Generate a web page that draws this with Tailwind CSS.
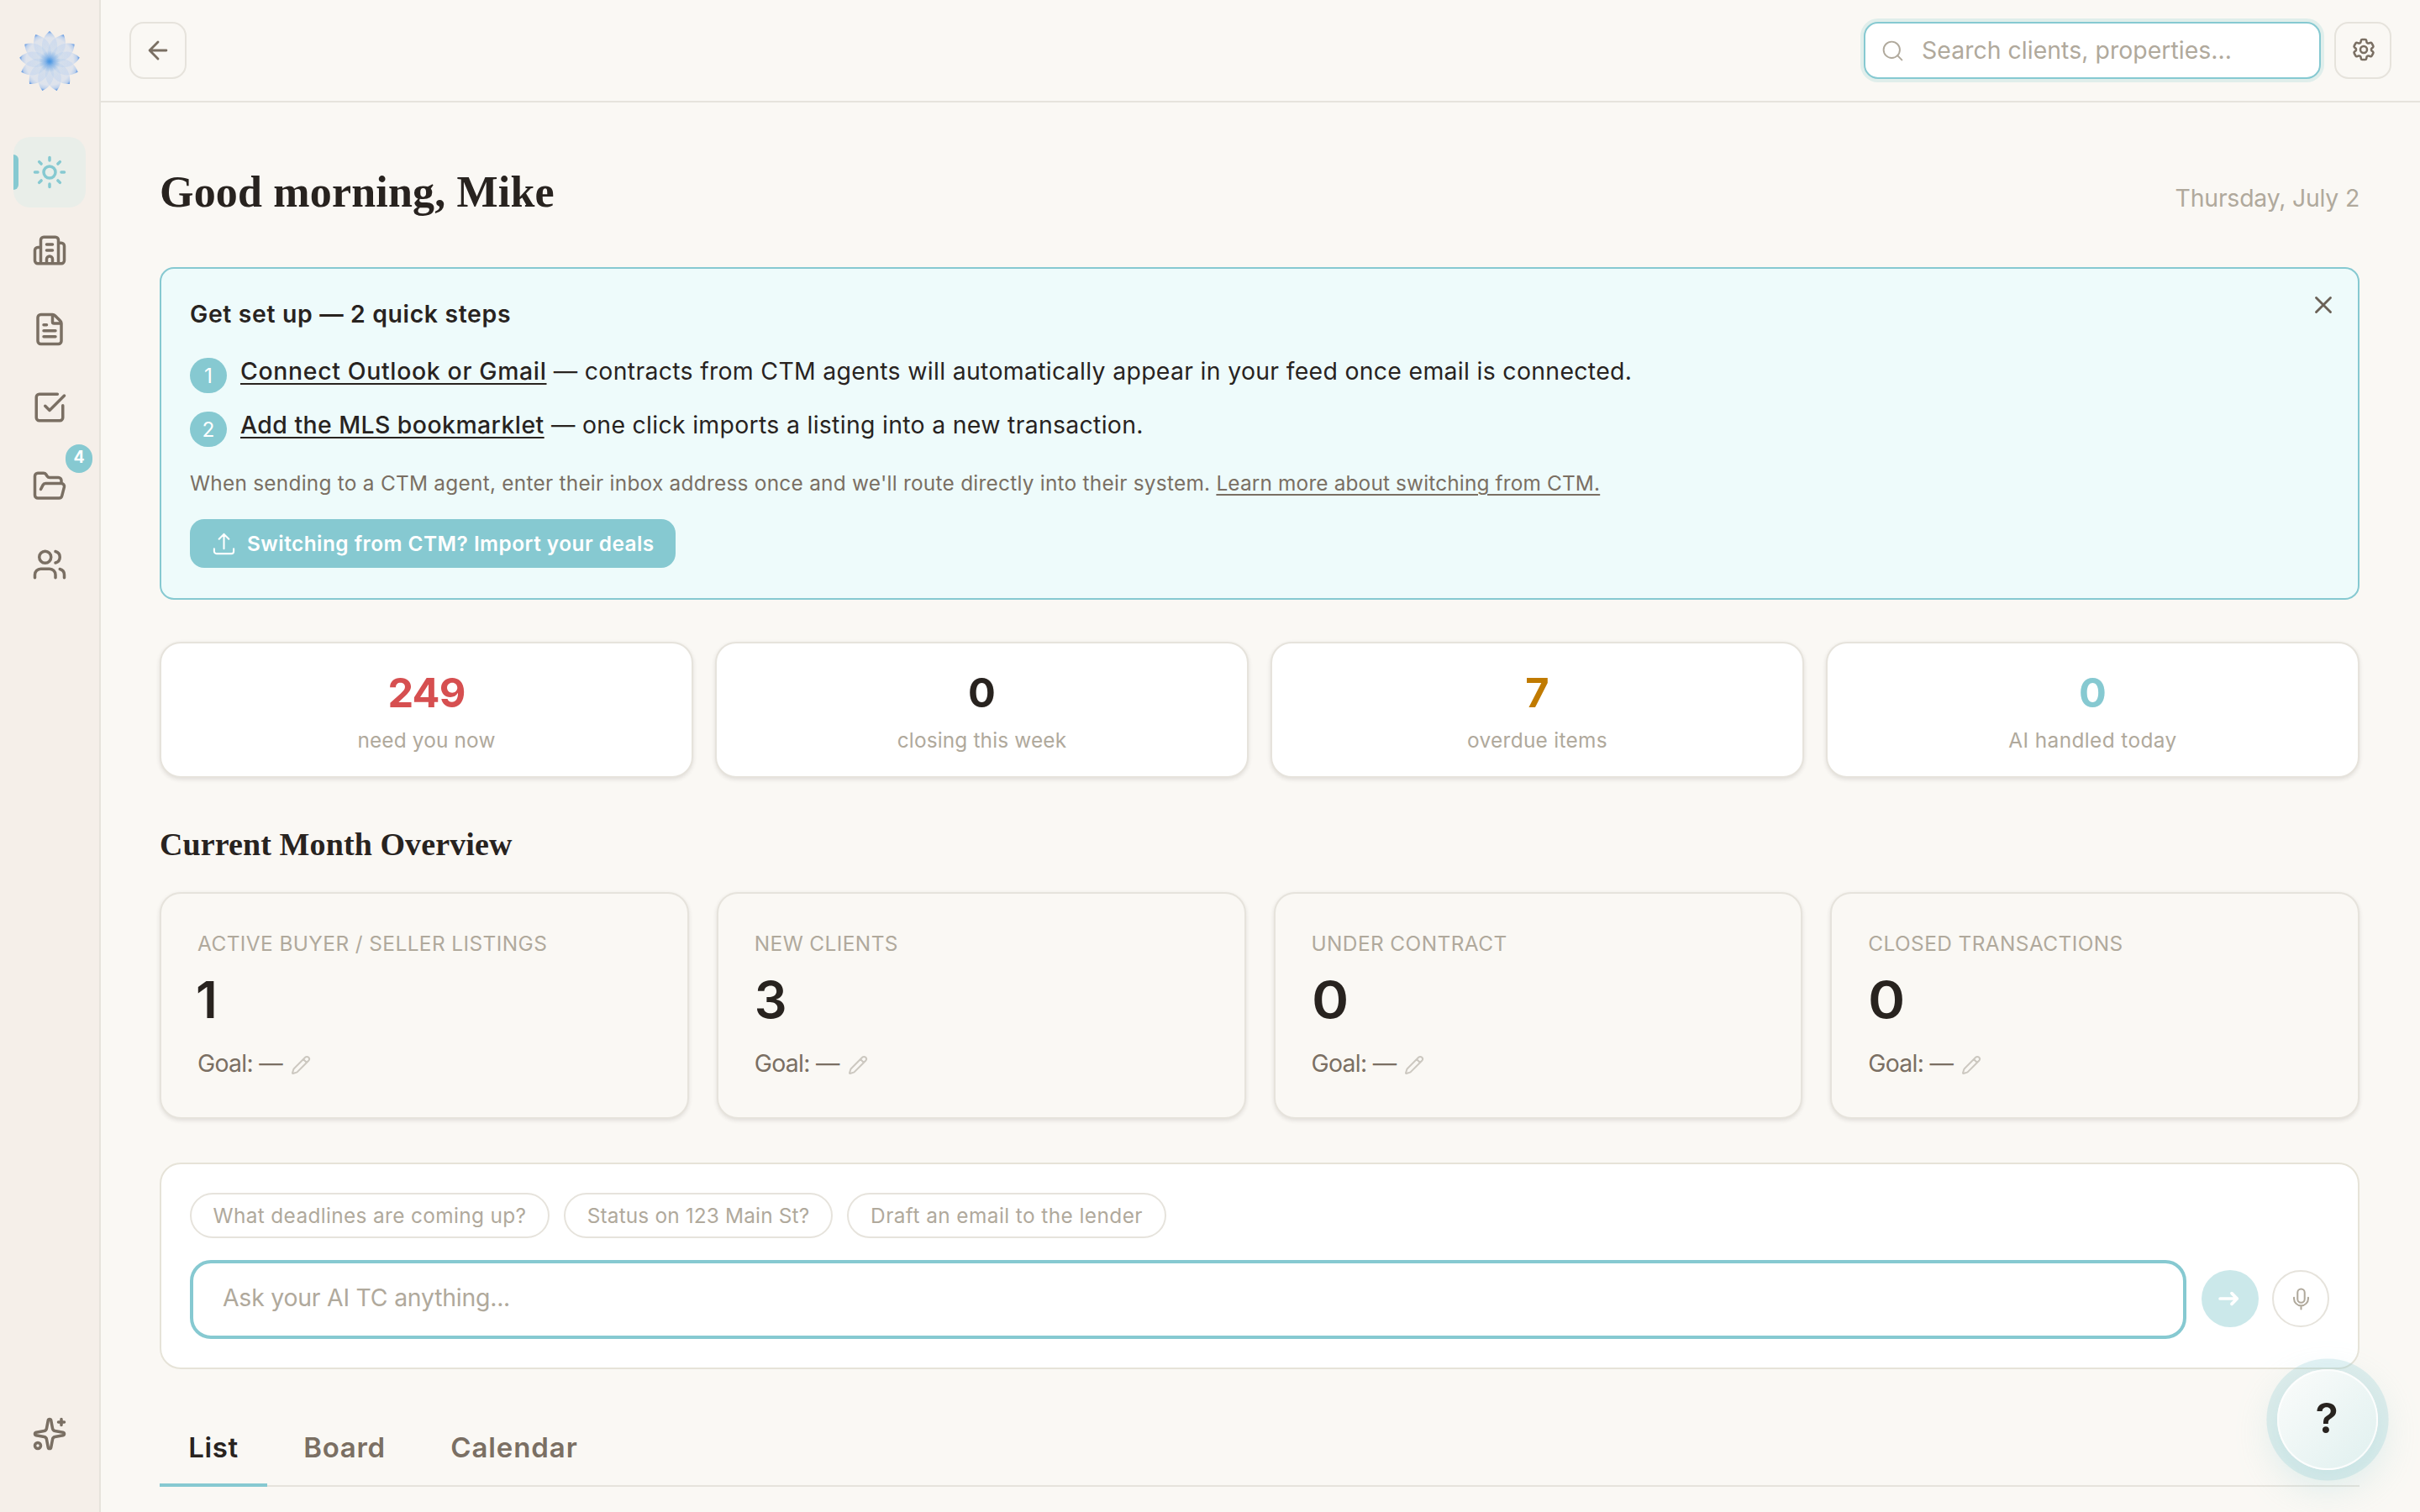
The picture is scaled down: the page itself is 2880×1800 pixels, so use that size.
<!DOCTYPE html>
<html lang="en">
<head>
<meta charset="utf-8">
<title>Dashboard</title>
<script src="https://cdn.jsdelivr.net/npm/@tailwindcss/browser@4"></script>
</head>
<body class="flex w-[2880px] h-[1800px] overflow-hidden relative bg-[#faf8f4] text-[#28231f] font-['Inter',sans-serif] text-[28.4px]">

<!-- Sidebar -->
<aside class="w-[120px] h-full shrink-0 flex flex-col items-center bg-[#f5efe9] border-r-2 border-[#e6e3dc] pt-[35px] pb-[72px]">
  <svg class="size-[74px]" viewBox="-35 -36 70 70">
    <defs>
      <radialGradient id="petal" gradientUnits="userSpaceOnUse" cx="0" cy="0" r="34">
        <stop offset="0" stop-color="#2f8ae2" stop-opacity=".55"/>
        <stop offset=".14" stop-color="#5b9ee6" stop-opacity=".34"/>
        <stop offset=".36" stop-color="#a9c8ee" stop-opacity=".24"/>
        <stop offset=".78" stop-color="#b4cdf2" stop-opacity=".36"/>
        <stop offset=".91" stop-color="#8db6ee" stop-opacity=".55"/>
        <stop offset="1" stop-color="#3f82dc" stop-opacity="1"/>
      </radialGradient>
      <path id="p" d="M0 0C-13 -12 -10 -26 0 -34C10 -26 13 -12 0 0Z" fill="url(#petal)"/>
    </defs>
    <use href="#p"/><use href="#p" transform="rotate(27.69)"/><use href="#p" transform="rotate(55.38)"/><use href="#p" transform="rotate(83.08)"/><use href="#p" transform="rotate(110.77)"/><use href="#p" transform="rotate(138.46)"/><use href="#p" transform="rotate(166.15)"/><use href="#p" transform="rotate(193.85)"/><use href="#p" transform="rotate(221.54)"/><use href="#p" transform="rotate(249.23)"/><use href="#p" transform="rotate(276.92)"/><use href="#p" transform="rotate(304.62)"/><use href="#p" transform="rotate(332.31)"/>
  </svg>
  <nav class="mt-[54px] flex flex-col gap-[9.4px] text-[#7a6f63]">
    <a class="relative flex items-center justify-center w-[86px] h-[84px] rounded-[20px] bg-[#e9eee9] text-[#86c9d1]">
      <span class="absolute left-0 top-[21px] w-[6px] h-[42px] rounded-r-[6px] bg-[#86c9d1]"></span>
      <svg class="size-[42px]" viewBox="0 0 24 24" fill="none" stroke="currentColor" stroke-width="2" stroke-linecap="round" stroke-linejoin="round"><circle cx="12" cy="12" r="4"/><path d="M12 2v2M12 20v2M4.93 4.93l1.41 1.41M17.66 17.66l1.41 1.41M2 12h2M20 12h2M6.34 17.66l-1.41 1.41M19.07 4.93l-1.41 1.41"/></svg>
    </a>
    <a class="flex items-center justify-center w-[86px] h-[84px]">
      <svg class="size-[42px]" viewBox="0 0 24 24" fill="none" stroke="currentColor" stroke-width="2" stroke-linecap="round" stroke-linejoin="round"><path d="M10 12h4M10 8h4M14 21v-3a2 2 0 0 0-4 0v3M6 10H4a2 2 0 0 0-2 2v7a2 2 0 0 0 2 2h16a2 2 0 0 0 2-2V9a2 2 0 0 0-2-2h-2M6 21V5a2 2 0 0 1 2-2h8a2 2 0 0 1 2 2v16"/></svg>
    </a>
    <a class="flex items-center justify-center w-[86px] h-[84px]">
      <svg class="size-[42px]" viewBox="0 0 24 24" fill="none" stroke="currentColor" stroke-width="2" stroke-linecap="round" stroke-linejoin="round"><path d="M6 22a2 2 0 0 1-2-2V4a2 2 0 0 1 2-2h8a2.4 2.4 0 0 1 1.704.706l3.588 3.588A2.4 2.4 0 0 1 20 8v12a2 2 0 0 1-2 2zM14 2v5a1 1 0 0 0 1 1h5M10 9H8M16 13H8M16 17H8"/></svg>
    </a>
    <a class="flex items-center justify-center w-[86px] h-[84px]">
      <svg class="size-[42px]" viewBox="0 0 24 24" fill="none" stroke="currentColor" stroke-width="2" stroke-linecap="round" stroke-linejoin="round"><path d="M21 10.656V19a2 2 0 0 1-2 2H5a2 2 0 0 1-2-2V5a2 2 0 0 1 2-2h12.344M9 11l3 3L22 4"/></svg>
    </a>
    <a class="relative flex items-center justify-center w-[86px] h-[84px]">
      <svg class="size-[42px]" viewBox="0 0 24 24" fill="none" stroke="currentColor" stroke-width="2" stroke-linecap="round" stroke-linejoin="round"><path d="m6 14 1.5-2.9A2 2 0 0 1 9.24 10H20a2 2 0 0 1 1.94 2.5l-1.54 6a2 2 0 0 1-1.95 1.5H4a2 2 0 0 1-2-2V5a2 2 0 0 1 2-2h3.9a2 2 0 0 1 1.69.9l.81 1.2a2 2 0 0 0 1.67.9H18a2 2 0 0 1 2 2v2"/></svg>
      <span class="absolute -right-2 -top-2 flex items-center justify-center w-8 h-[34px] rounded-full bg-[#86c9d1] text-white text-[19.5px] font-bold leading-none pb-[2px]">4</span>
    </a>
    <a class="flex items-center justify-center w-[86px] h-[84px]">
      <svg class="size-[42px]" viewBox="0 0 24 24" fill="none" stroke="currentColor" stroke-width="2" stroke-linecap="round" stroke-linejoin="round"><path d="M16 21v-2a4 4 0 0 0-4-4H6a4 4 0 0 0-4 4v2M16 3.128a4 4 0 0 1 0 7.744M22 21v-2a4 4 0 0 0-3-3.87"/><circle cx="9" cy="7" r="4"/></svg>
    </a>
  </nav>
  <svg class="size-[42px] mt-auto text-[#7a6f63]" viewBox="0 0 24 24" fill="none" stroke="currentColor" stroke-width="2" stroke-linecap="round" stroke-linejoin="round"><path d="M11.017 2.814a1 1 0 0 1 1.966 0l1.051 5.558a2 2 0 0 0 1.594 1.594l5.558 1.051a1 1 0 0 1 0 1.966l-5.558 1.051a2 2 0 0 0-1.594 1.594l-1.051 5.558a1 1 0 0 1-1.966 0l-1.051-5.558a2 2 0 0 0-1.594-1.594l-5.558-1.051a1 1 0 0 1 0-1.966l5.558-1.051a2 2 0 0 0 1.594-1.594zM20 2v4M22 4h-4"/><circle cx="4" cy="20" r="2"/></svg>
</aside>

<div class="flex-1 flex flex-col min-w-0">
  <!-- Top bar -->
  <header class="h-[122px] shrink-0 flex items-center border-b-2 border-[#e6e3dc] pl-[34px] pr-[34px]">
    <button class="size-[68px] flex items-center justify-center rounded-[17px] border-2 border-[#e6e3dc]">
      <svg class="size-[34px]" viewBox="0 0 24 24" fill="none" stroke="#7a6f63" stroke-width="2" stroke-linecap="round" stroke-linejoin="round"><path d="m12 19-7-7 7-7M19 12H5"/></svg>
    </button>
    <div class="ml-auto w-[544px] h-[68px] flex items-center gap-[20px] pl-[18px] rounded-[17px] border-2 border-[#86c9d1] bg-white shadow-[0_0_0_4px_#e0eeeb] text-[#b0a99c] tracking-[0.05px]">
      <svg class="size-[29px] shrink-0" viewBox="0 0 24 24" fill="none" stroke="currentColor" stroke-width="1.6" stroke-linecap="round" stroke-linejoin="round"><circle cx="11" cy="11" r="8"/><path d="m21 21-4.3-4.3"/></svg>
      <span>Search clients, properties...</span>
    </div>
    <button class="ml-4 size-[68px] flex items-center justify-center rounded-[17px] border-2 border-[#e6e3dc] pb-[2px] pl-px">
      <svg class="size-[32px]" viewBox="0 0 24 24" fill="none" stroke="#7a6f63" stroke-width="1.9" stroke-linecap="round" stroke-linejoin="round"><path d="M9.594 3.94c.09-.542.56-.94 1.11-.94h2.593c.55 0 1.02.398 1.11.94l.213 1.281c.063.374.313.686.645.87.074.04.147.083.22.127.325.196.72.257 1.075.124l1.217-.456a1.125 1.125 0 0 1 1.37.49l1.296 2.247a1.125 1.125 0 0 1-.26 1.431l-1.003.827c-.293.241-.438.613-.43.992a7.723 7.723 0 0 1 0 .255c-.008.378.137.75.43.991l1.004.827c.424.35.534.955.26 1.43l-1.298 2.247a1.125 1.125 0 0 1-1.369.491l-1.217-.456c-.355-.133-.75-.072-1.076.124a6.47 6.47 0 0 1-.22.128c-.331.183-.581.495-.644.869l-.213 1.281c-.09.543-.56.94-1.11.94h-2.594c-.55 0-1.019-.398-1.11-.94l-.213-1.281c-.062-.374-.312-.686-.644-.87a6.52 6.52 0 0 1-.22-.127c-.325-.196-.72-.257-1.076-.124l-1.217.456a1.125 1.125 0 0 1-1.369-.49l-1.297-2.247a1.125 1.125 0 0 1 .26-1.431l1.004-.827c.292-.24.437-.613.43-.991a6.932 6.932 0 0 1 0-.255c.007-.38-.138-.751-.43-.992l-1.004-.827a1.125 1.125 0 0 1-.26-1.43l1.297-2.247a1.125 1.125 0 0 1 1.37-.491l1.216.456c.356.133.751.072 1.076-.124.072-.044.146-.086.22-.128.332-.183.582-.495.644-.869l.214-1.28Z"/><circle cx="12" cy="12" r="3"/></svg>
    </button>
  </header>

  <main class="pl-[70px] pr-[72px] pt-[75px] flex flex-col">
    <div class="h-16 flex justify-between">
      <h1 class="font-['Liberation_Serif',serif] font-bold text-[52px] leading-[64px] tracking-[0.18px]">Good morning, Mike</h1>
      <span class="pt-[14px] leading-[50px] text-[#b0a99c] tracking-[-0.2px]">Thursday, July 2</span>
    </div>

    <!-- Setup banner -->
    <section class="relative mt-[57px] h-[396px] rounded-[17px] border-2 border-[#86c9d1] bg-[#eefbfb] pl-[34px] pt-[34px] flex flex-col items-start">
      <h2 class="font-semibold leading-10 tracking-[0.65px]">Get set up — 2 quick steps</h2>
      <div class="mt-7 h-[46px] flex gap-4">
        <span class="mt-1 w-11 h-[42px] rounded-full bg-[#86c9d1] text-white text-[24.4px] flex items-center justify-center">1</span>
        <p class="leading-10 tracking-[0.32px]"><a class="font-medium tracking-[0.67px] underline decoration-2 underline-offset-4">Connect Outlook or Gmail</a> — contracts from CTM agents will automatically appear in your feed once email is connected.</p>
      </div>
      <div class="mt-[18px] h-[46px] flex gap-4">
        <span class="mt-1 w-11 h-[42px] rounded-full bg-[#86c9d1] text-white text-[24.4px] flex items-center justify-center">2</span>
        <p class="leading-10 tracking-[0.31px]"><a class="font-medium tracking-[0.45px] underline decoration-2 underline-offset-4">Add the MLS bookmarklet</a> — one click imports a listing into a new transaction.</p>
      </div>
      <p class="mt-[25px] text-[24.4px] leading-9 tracking-[0.255px] text-[#7a6f63]">When sending to a CTM agent, enter their inbox address once and we'll route directly into their system. <a class="tracking-[0.15px] underline decoration-2 underline-offset-4">Learn more about switching from CTM.</a></p>
      <button class="mt-[25px] w-[578px] h-[58px] rounded-[17px] bg-[#86c9d1] text-white flex items-center pl-[25px] gap-3 font-semibold text-[24.4px] tracking-[0.47px] whitespace-nowrap">
        <svg class="size-[31px]" viewBox="0 0 24 24" fill="none" stroke="currentColor" stroke-width="1.6" stroke-linecap="round" stroke-linejoin="round"><path d="M3 16.5v2.25A2.25 2.25 0 0 0 5.25 21h13.5A2.25 2.25 0 0 0 21 18.75V16.5M7.5 7.5 12 3l4.5 4.5M12 3v13.5"/></svg>
        Switching from CTM? Import your deals
      </button>
      <svg class="absolute right-[24px] top-[26px] size-[34px]" viewBox="0 0 24 24" fill="none" stroke="#6b6157" stroke-width="2" stroke-linecap="round"><path d="M18 6 6 18M6 6l12 12"/></svg>
    </section>

    <!-- Today stats -->
    <section class="mt-[50px] grid grid-cols-4 gap-[26px] text-center">
      <div class="h-[162px] rounded-[25px] border-2 border-[#e6e3dc] bg-white shadow-[0_2px_5px_rgba(40,35,31,0.12)] pt-[29px]">
        <div class="text-[48.7px] leading-[60px] font-bold text-[#d64f50] tracking-[-0.9px]">249</div>
        <div class="mt-[8px] text-[24.4px] leading-9 text-[#b0a99c] tracking-[0.15px]">need you now</div>
      </div>
      <div class="h-[162px] rounded-[25px] border-2 border-[#e6e3dc] bg-white shadow-[0_2px_5px_rgba(40,35,31,0.12)] pt-[29px]">
        <div class="text-[48.7px] leading-[60px] font-bold">0</div>
        <div class="mt-[8px] text-[24.4px] leading-9 text-[#b0a99c] tracking-[0.15px]">closing this week</div>
      </div>
      <div class="h-[162px] rounded-[25px] border-2 border-[#e6e3dc] bg-white shadow-[0_2px_5px_rgba(40,35,31,0.12)] pt-[29px]">
        <div class="text-[48.7px] leading-[60px] font-bold text-[#c07a00]">7</div>
        <div class="mt-[8px] text-[24.4px] leading-9 text-[#b0a99c] tracking-[0.3px]">overdue items</div>
      </div>
      <div class="h-[162px] rounded-[25px] border-2 border-[#e6e3dc] bg-white shadow-[0_2px_5px_rgba(40,35,31,0.12)] pt-[29px]">
        <div class="text-[48.7px] leading-[60px] font-bold text-[#86c9d1]">0</div>
        <div class="mt-[8px] text-[24.4px] leading-9 text-[#b0a99c] tracking-[0.4px]">AI handled today</div>
      </div>
    </section>

    <!-- Month overview -->
    <h2 class="mt-[55px] font-['Liberation_Serif',serif] font-bold text-[38px] leading-[48px] tracking-[0.1px]">Current Month Overview</h2>
    <section class="mt-[33px] grid grid-cols-4 gap-[33px]">
      <div class="h-[270px] rounded-[25px] border-2 border-[#e6e3dc] shadow-[0_2px_5px_rgba(40,35,31,0.12)] bg-[#faf8f4] pl-[43px] pt-[41px]">
        <div class="text-[24.4px] leading-9 text-[#b0a99c] tracking-[0.42px]">ACTIVE BUYER / SELLER LISTINGS</div>
        <div class="mt-[13px] text-[61px] leading-[72px] font-semibold -ml-[2px]">1</div>
        <div class="mt-5 h-10 leading-10 flex items-center gap-[10px] text-[#7a6f63] tracking-[-0.7px]">Goal: — <svg class="mt-1 size-[24px]" viewBox="0 0 24 24" fill="none" stroke="#ccc8c0" stroke-width="2" stroke-linecap="round" stroke-linejoin="round"><path d="M21.174 6.812a1 1 0 0 0-3.986-3.987L3.842 16.174a2 2 0 0 0-.5.83l-1.321 4.352a.5.5 0 0 0 .623.622l4.353-1.32a2 2 0 0 0 .83-.497zM15 5l4 4"/></svg></div>
      </div>
      <div class="h-[270px] rounded-[25px] border-2 border-[#e6e3dc] shadow-[0_2px_5px_rgba(40,35,31,0.12)] bg-[#faf8f4] pl-[43px] pt-[41px]">
        <div class="text-[24.4px] leading-9 text-[#b0a99c] tracking-[0.42px]">NEW CLIENTS</div>
        <div class="mt-[13px] text-[61px] leading-[72px] font-semibold">3</div>
        <div class="mt-5 h-10 leading-10 flex items-center gap-[10px] text-[#7a6f63] tracking-[-0.7px]">Goal: — <svg class="mt-1 size-[24px]" viewBox="0 0 24 24" fill="none" stroke="#ccc8c0" stroke-width="2" stroke-linecap="round" stroke-linejoin="round"><path d="M21.174 6.812a1 1 0 0 0-3.986-3.987L3.842 16.174a2 2 0 0 0-.5.83l-1.321 4.352a.5.5 0 0 0 .623.622l4.353-1.32a2 2 0 0 0 .83-.497zM15 5l4 4"/></svg></div>
      </div>
      <div class="h-[270px] rounded-[25px] border-2 border-[#e6e3dc] shadow-[0_2px_5px_rgba(40,35,31,0.12)] bg-[#faf8f4] pl-[43px] pt-[41px]">
        <div class="text-[24.4px] leading-9 text-[#b0a99c] tracking-[0.42px]">UNDER CONTRACT</div>
        <div class="mt-[13px] text-[61px] leading-[72px] font-semibold"><span class="inline-block origin-left scale-x-110">0</span></div>
        <div class="mt-5 h-10 leading-10 flex items-center gap-[10px] text-[#7a6f63] tracking-[-0.7px]">Goal: — <svg class="mt-1 size-[24px]" viewBox="0 0 24 24" fill="none" stroke="#ccc8c0" stroke-width="2" stroke-linecap="round" stroke-linejoin="round"><path d="M21.174 6.812a1 1 0 0 0-3.986-3.987L3.842 16.174a2 2 0 0 0-.5.83l-1.321 4.352a.5.5 0 0 0 .623.622l4.353-1.32a2 2 0 0 0 .83-.497zM15 5l4 4"/></svg></div>
      </div>
      <div class="h-[270px] rounded-[25px] border-2 border-[#e6e3dc] shadow-[0_2px_5px_rgba(40,35,31,0.12)] bg-[#faf8f4] pl-[43px] pt-[41px]">
        <div class="text-[24.4px] leading-9 text-[#b0a99c] tracking-[0.42px]">CLOSED TRANSACTIONS</div>
        <div class="mt-[13px] text-[61px] leading-[72px] font-semibold"><span class="inline-block origin-left scale-x-110">0</span></div>
        <div class="mt-5 h-10 leading-10 flex items-center gap-[10px] text-[#7a6f63] tracking-[-0.7px]">Goal: — <svg class="mt-1 size-[24px]" viewBox="0 0 24 24" fill="none" stroke="#ccc8c0" stroke-width="2" stroke-linecap="round" stroke-linejoin="round"><path d="M21.174 6.812a1 1 0 0 0-3.986-3.987L3.842 16.174a2 2 0 0 0-.5.83l-1.321 4.352a.5.5 0 0 0 .623.622l4.353-1.32a2 2 0 0 0 .83-.497zM15 5l4 4"/></svg></div>
      </div>
    </section>

    <!-- Assistant -->
    <section class="mt-[52px] h-[246px] rounded-[25px] border-2 border-[#e6e3d8] bg-white px-[34px] pt-[34px] text-[#b0a99c]">
      <div class="flex gap-[17px] h-[54px] text-[24.4px]">
        <span class="w-[428px] flex items-center justify-center rounded-full border-2 border-[#e6e3dc] tracking-[0.35px]">What deadlines are coming up?</span>
        <span class="w-[320px] flex items-center justify-center rounded-full border-2 border-[#e6e3dc] tracking-[0.15px]">Status on 123 Main St?</span>
        <span class="w-[380px] flex items-center justify-center rounded-full border-2 border-[#e6e3dc] tracking-[0.42px]">Draft an email to the lender</span>
      </div>
      <div class="mt-[26px] flex">
        <div class="flex-1 h-[94px] flex items-center rounded-[25px] border-4 border-[#86c9d1] pl-[35px] pb-[3px] tracking-[-0.22px]">Ask your AI TC anything...</div>
        <button class="ml-[18px] mt-3 size-[68px] rounded-full bg-[#cbe8ea] flex items-center justify-center pr-1">
          <svg class="size-[34px]" viewBox="0 0 24 24" fill="none" stroke="white" stroke-width="2.6" stroke-linecap="round" stroke-linejoin="round"><path d="M5 12h14.2M14.8 7.500l4.500 4.500-4.500 4.500"/></svg>
        </button>
        <button class="ml-4 mt-3 size-[68px] rounded-full border-2 border-[#e6e3dc] flex items-center justify-center">
          <svg class="size-[29px]" viewBox="0 0 24 24" fill="none" stroke="currentColor" stroke-width="1.7" stroke-linecap="round" stroke-linejoin="round"><path d="M12 18.500v3.500M19 10.500v1a7 7 0 0 1-14 0v-1"/><rect x="8.500" y="2" width="7" height="13.500" rx="3.500"/></svg>
        </button>
      </div>
    </section>

    <!-- View tabs -->
    <div class="mt-[69px] h-[71px] flex gap-2 border-b-2 border-[#e6e3dc] text-[33px] leading-[48px] font-semibold text-center text-[#7a6f63]">
      <a class="w-[128px] h-[71px] border-b-4 border-[#86c9d1] text-[#28231f] tracking-[0.6px]">List</a>
      <a class="w-[168px] tracking-[0.7px]">Board</a>
      <a class="w-[220px] tracking-[0.9px]">Calendar</a>
    </div>
  </main>
</div>

<!-- Help -->
<button class="absolute left-[2710px] top-[1630px] size-[120px] rounded-full border-2 border-white/80 bg-linear-to-br from-[#fbfcfb] to-[#e0f0ef] shadow-[0_0_0_12.6px_rgba(134,201,209,0.24),0_16px_50px_rgba(134,201,209,0.32)] flex items-center justify-center pb-1 pr-[2px] text-[50px] font-semibold leading-none">?</button>
</body>
</html>
